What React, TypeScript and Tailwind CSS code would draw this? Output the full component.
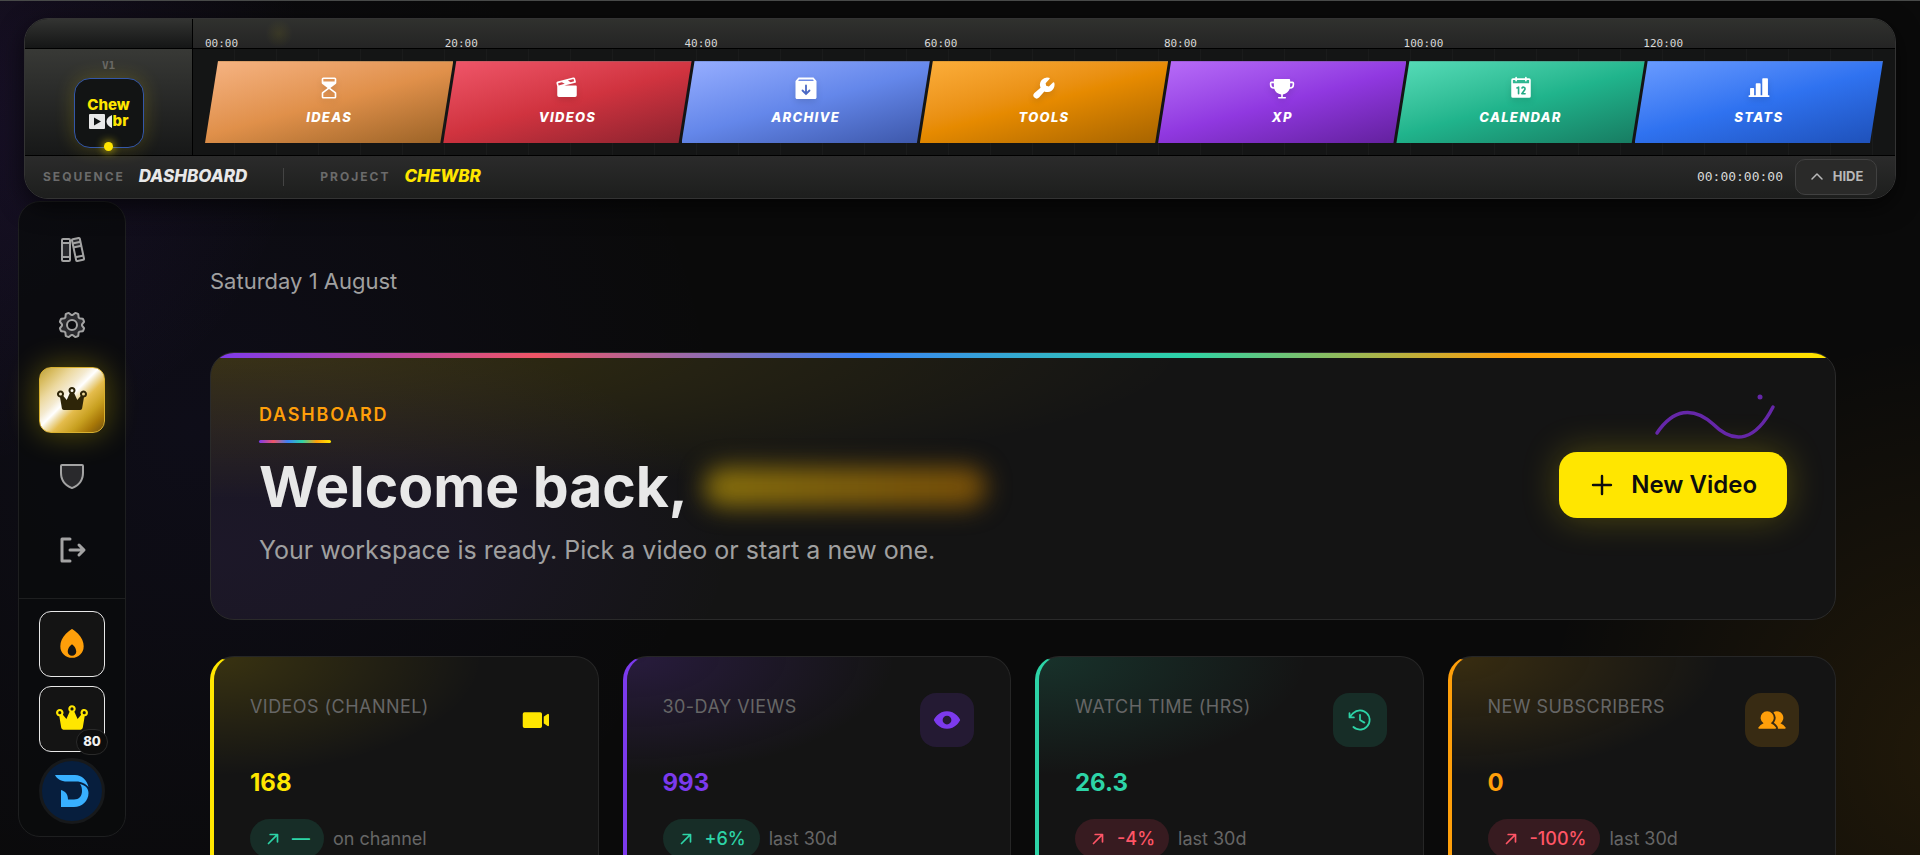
import type { IconType } from 'react-icons'
import {
  PiArrowUpRightBold,
  PiBooksDuotone,
  PiCalendarFill,
  PiCaretUpBold,
  PiChartBarFill,
  PiClockCounterClockwise,
  PiCrownFill,
  PiEyeFill,
  PiFilmSlateFill,
  PiFlameFill,
  PiGearDuotone,
  PiHourglassHighFill,
  PiPlusBold,
  PiShieldDuotone,
  PiSignOutBold,
  PiTrophyFill,
  PiUsersFill,
  PiVideoCameraFill,
  PiWrenchFill,
} from 'react-icons/pi'

function ArchiveIcon({ className }: { className?: string }) {
  return (
    <svg className={className} viewBox="0 0 26 26" fill="none" aria-hidden="true">
      <path
        fillRule="evenodd"
        fill="currentColor"
        d="M5.500 2.500H20.500L23.500 6V22.500C23.500 23.300 22.800 24 22 24H4C3.200 24 2.500 23.300 2.500 22.500V6ZM6 4.500 5.200 6H20.800L20 4.500Z"
      />
      <path d="M13 10.500V18.500M9.500 15.500 13 19 16.500 15.500" stroke="#4a68c4" strokeWidth="1.800" strokeLinecap="round" />
    </svg>
  )
}

type Clip = { label: string; icon: IconType | typeof ArchiveIcon; color: string }

const clips: Clip[] = [
  { label: 'IDEAS', icon: PiHourglassHighFill, color: 'from-[#f6b483] via-[#e0904a] to-[#9a6226]' },
  { label: 'VIDEOS', icon: PiFilmSlateFill, color: 'from-[#f0566a] via-[#d0333f] to-[#8a222e]' },
  { label: 'ARCHIVE', icon: ArchiveIcon, color: 'from-[#97aeff] via-[#6487ea] to-[#3c56a8]' },
  { label: 'TOOLS', icon: PiWrenchFill, color: 'from-[#fcae3a] via-[#e68a00] to-[#a56300]' },
  { label: 'XP', icon: PiTrophyFill, color: 'from-[#b86cf8] via-[#9038e0] to-[#62209c]' },
  { label: 'CALENDAR', icon: PiCalendarFill, color: 'from-[#56dcb8] via-[#20b48c] to-[#177a60]' },
  { label: 'STATS', icon: PiChartBarFill, color: 'from-[#6a9bff] via-[#2f72f0] to-[#1e50b8]' },
]

const ticks = ['00:00', '20:00', '40:00', '60:00', '80:00', '100:00', '120:00']

const sideLinks = [
  { label: 'Library', icon: PiBooksDuotone },
  { label: 'Settings', icon: PiGearDuotone },
  { label: 'Premium', icon: PiCrownFill, active: true },
  { label: 'Privacy', icon: PiShieldDuotone },
  { label: 'Sign out', icon: PiSignOutBold },
]

const stats = [
  {
    label: 'VIDEOS (CHANNEL)',
    value: '168',
    delta: '—',
    up: true,
    note: 'on channel',
    icon: PiVideoCameraFill,
    card: 'border-l-[#ffe600] bg-[radial-gradient(ellipse_70%_50%_at_top_left,#ffd60028,transparent)]',
    text: 'text-[#ffe600]',
    tile: '',
  },
  {
    label: '30-DAY VIEWS',
    value: '993',
    delta: '+6%',
    up: true,
    note: 'last 30d',
    icon: PiEyeFill,
    card: 'border-l-[#7c3aed] bg-[radial-gradient(ellipse_70%_50%_at_top_left,#7c3aed30,transparent)]',
    text: 'text-[#7c3aed]',
    tile: 'bg-[#241a33]',
  },
  {
    label: 'WATCH TIME (HRS)',
    value: '26.3',
    delta: '-4%',
    up: false,
    note: 'last 30d',
    icon: PiClockCounterClockwise,
    card: 'border-l-[#2dd4a7] bg-[radial-gradient(ellipse_70%_50%_at_top_left,#2dd4a728,transparent)]',
    text: 'text-[#2dd4a7]',
    tile: 'bg-[#172d27]',
  },
  {
    label: 'NEW SUBSCRIBERS',
    value: '0',
    delta: '-100%',
    up: false,
    note: 'last 30d',
    icon: PiUsersFill,
    card: 'border-l-[#ff9f0a] bg-[radial-gradient(ellipse_70%_50%_at_top_left,#ffb40028,transparent)]',
    text: 'text-[#ff9f0a]',
    tile: 'bg-[#382b13]',
  },
]

function Logo() {
  return (
    <a
      href="#"
      aria-label="Chewbr home"
      className="relative flex h-[70px] w-[70px] flex-col items-center justify-center rounded-2xl border border-[#3457a8] bg-[#121414] text-[15px] leading-4 font-extrabold text-[#ffe600] shadow-[0_0_20px_#ffe60033]"
    >
      <span>Chew</span>
      <span className="flex items-center">
        <svg width="24" height="15" viewBox="0 0 24 15" aria-hidden="true">
          <rect x="0" y="0" width="16" height="15" rx="1" fill="#e8e8e8" />
          <path d="M5 3.5 12 7.5 5 11.5Z" fill="#121414" />
          <path d="M23 1V14C19 12 17.500 10 17.500 7.500S19 3 23 1Z" fill="#e8e8e8" />
        </svg>
        br
      </span>
      <span className="absolute -bottom-1 h-[9px] w-[9px] rounded-full bg-[#ffe600] shadow-[0_0_10px_#ffe600]" />
    </a>
  )
}

function TimelineHeader() {
  return (
    <header className="relative z-10 mx-6 overflow-hidden rounded-3xl border border-[#333] bg-[#141515] shadow-[0_8px_24px_#0009]">
      <div className="flex">
        <div className="w-[168px] shrink-0 border-r border-black">
          <div className="h-[30px] border-b border-black bg-linear-to-b from-[#333432] to-[#151616]" />
          <div className="flex h-[106px] flex-col items-center gap-1 bg-linear-to-b from-[#383936] to-[#171818] pt-[9px]">
            <span className="font-[DejaVu_Sans_Mono] text-[11px] leading-4 font-bold text-[#666]">V1</span>
            <Logo />
          </div>
        </div>
        <div className="min-w-0 flex-1">
          <div className="relative flex h-[30px] items-end border-b border-black bg-linear-to-b from-[#30312e] to-[#242424] px-3">
            <div className="absolute inset-y-0 left-[72px] w-7 bg-[radial-gradient(ellipse_at_center,#ffe60012,transparent_70%)]" />
            {ticks.map((t) => (
              <span key={t} className="flex-1 font-[DejaVu_Sans_Mono] text-[11px] leading-2 text-[#d8d8d8]">
                {t}
              </span>
            ))}
          </div>
          <nav className="flex h-[106px] bg-[repeating-linear-gradient(90deg,#141515_0,#141515_41px,#1a1b1b_41px,#1a1b1b_42px)] px-3 py-3">
            {clips.map(({ label, icon: Icon, color }) => (
              <a
                key={label}
                href="#"
                className={`-mr-[10px] flex flex-1 flex-col items-center justify-center gap-1.5 border-t border-white/20 bg-linear-165 pb-[3px] text-white [clip-path:polygon(13px_0,100%_0,calc(100%_-_13px)_100%,0_100%)] last:mr-0 ${color}`}
              >
                <Icon className="h-[26px] w-[26px] drop-shadow-md" />
                <span className="text-[13px] leading-5 font-extrabold tracking-widest italic">{label}</span>
              </a>
            ))}
          </nav>
        </div>
      </div>
      <div className="flex h-[43px] items-center border-t border-black bg-linear-to-b from-[#2b2b2b] to-[#1d1e1d] px-[18px]">
        <span className="text-xs font-bold tracking-[2px] text-[#6b6b6b]">SEQUENCE</span>
        <span className="ml-3.5 text-[17px] font-extrabold text-[#e8e8e8] italic">DASHBOARD</span>
        <span className="mx-9 h-[18px] w-px bg-[#444]" />
        <span className="text-xs font-bold tracking-[2px] text-[#6b6b6b]">PROJECT</span>
        <span className="ml-3.5 text-[17px] font-extrabold text-[#ffe600] italic">CHEWBR</span>
        <span className="ml-auto font-[DejaVu_Sans_Mono] text-[13px] text-[#d8d8d8]">00:00:00:00</span>
        <button
          type="button"
          className="ml-3 flex h-9 w-[82px] items-center justify-center gap-2 rounded-[10px] border border-[#414141] bg-[#2a2a29] text-[13px] font-bold text-[#b8b8b8]"
        >
          <PiCaretUpBold className="h-4 w-4" />
          HIDE
        </button>
      </div>
    </header>
  )
}

function Sidebar() {
  return (
    <aside className="flex w-[108px] shrink-0 flex-col self-start rounded-[22px] border border-[#1e1f20] bg-[#0a0b0d]/80">
      <nav className="flex flex-col items-center gap-[9px] py-[15px]">
        {sideLinks.map(({ label, icon: Icon, active }) => (
          <a
            key={label}
            href="#"
            aria-label={label}
            className={
              active
                ? 'flex h-[66px] w-[66px] items-center justify-center rounded-xl border border-[#d8b030] bg-[linear-gradient(135deg,#b8a040_0%,#d8bc60_12%,#ecd9a0_26%,#f4ead0_38%,#fff_46%,#f0e0b0_52%,#e4bc4c_60%,#c8a020_74%,#a87808_86%,#705010_100%)] text-[#2e2508] shadow-[0_0_32px_#ffe60055]'
                : 'flex h-[66px] w-[66px] items-center justify-center text-[#a3a3a3]'
            }
          >
            <Icon className="h-8 w-8" />
          </a>
        ))}
      </nav>
      <div className="flex flex-col items-center border-t border-[#1e1f20] py-3">
        <button
          type="button"
          aria-label="Streak"
          className="flex h-[66px] w-[66px] items-center justify-center rounded-xl border border-[#e8e8e8] bg-[#141414] text-[#ff9f0a]"
        >
          <PiFlameFill className="h-[34px] w-[34px]" />
        </button>
        <button
          type="button"
          aria-label="Level"
          className="relative mt-[9px] flex h-[66px] w-[66px] items-center justify-center rounded-xl border border-[#e8e8e8] bg-[#141414] text-[#ffe600]"
        >
          <PiCrownFill className="h-[34px] w-[34px]" />
          <span className="absolute -right-1 -bottom-1 flex h-[26px] w-8 items-center justify-center rounded-full border border-[#2a2a2a] bg-[#0d0d0d] text-[13px] font-extrabold text-[#f0f0f0]">
            80
          </span>
        </button>
        <button
          type="button"
          aria-label="Profile"
          className="mt-1.5 flex h-[66px] w-[66px] items-center justify-center rounded-full border-[3px] border-[#17191b] bg-[#071e3d]"
        >
          <svg width="34" height="32" viewBox="0 0 34 32" fill="#38b0ff" aria-hidden="true">
            <path d="M0 0H20C27 0 32 5 33.500 12C31 9 27 6.500 21 6.500H12C6 6.500 2 4 0 0Z" />
            <path d="M25 9C30 10 33.500 13 33.500 18C33.500 26 27 32 19 32H6V15C10 16 13 19 13 24.500H19C24 24.500 27 21 27 16C27 13 26.500 11 25 9Z" />
          </svg>
        </button>
      </div>
    </aside>
  )
}

const rainbow = 'bg-[linear-gradient(90deg,#7c3aed,#ef5566_20%,#3b82f6_40%,#2dd4a7_60%,#ff9f0a_80%,#ffe600)]'

function Hero() {
  return (
    <section className="relative mt-[55px] flex items-center justify-between overflow-hidden rounded-3xl border border-[#2a2a2a] bg-[#141414] bg-[radial-gradient(ellipse_60%_55%_at_0%_0%,#ffd60026,transparent),radial-gradient(ellipse_32%_95%_at_0%_75%,#6c3aed18,#6c3aed12_50%,transparent)] px-12 pt-12 pb-[51px]">
      <div className={`absolute inset-x-0 top-0 h-[5px] ${rainbow}`} />
      <div>
        <p className="text-lg leading-7 font-semibold tracking-widest text-[#ff9f0a]">DASHBOARD</p>
        <div className={`mt-[11px] h-[3px] w-[72px] rounded-full ${rainbow}`} />
        <h1 className="mt-[11px] flex items-center text-[57px] leading-[66px] font-bold text-[#e8e8e8]">
          Welcome back,
          <span className="ml-4 h-10 w-[282px] rounded-full bg-linear-to-r from-[#8a720c] via-[#80600c] to-[#7a5008] blur-[12px]" />
        </h1>
        <p className="mt-3 text-[25px] leading-9 text-[#a0a0a0]">
          Your workspace is ready. Pick a video or start a new one.
        </p>
      </div>
      <div className="relative">
        <svg
          className="absolute right-[10px] bottom-[74px]"
          width="124"
          height="52"
          viewBox="0 0 124 52"
          fill="none"
          aria-hidden="true"
        >
          <path
            d="M4 41C20 17 40 14 60 32C82 54 103 48 120 15"
            stroke="#6527a8"
            strokeWidth="3.500"
            strokeLinecap="round"
          />
          <circle cx="107" cy="5" r="2.500" fill="#6527a8" />
        </svg>
        <button
          type="button"
          className="flex h-[66px] items-center gap-4 rounded-[18px] bg-[#ffe600] px-[30px] text-2xl font-semibold text-[#0d0d0d] shadow-[0_0_36px_#ffe60040]"
        >
          <PiPlusBold className="h-[26px] w-[26px]" />
          New Video
        </button>
      </div>
    </section>
  )
}

function StatCards() {
  return (
    <section className="mt-9 grid grid-cols-4 gap-6">
      {stats.map(({ label, value, delta, up, note, icon: Icon, card, text, tile }) => (
        <article key={label} className={`rounded-3xl border border-l-4 border-[#262626] bg-[#141414] p-9 ${card}`}>
          <div className="flex items-start justify-between">
            <h2 className="text-lg leading-7 tracking-wide text-[#666]">{label}</h2>
            <span className={`flex h-[54px] w-[54px] items-center justify-center rounded-2xl ${text} ${tile}`}>
              <Icon className="h-7 w-7" />
            </span>
          </div>
          <p className={`mt-[18px] text-2xl leading-9 font-bold ${text}`}>{value}</p>
          <div className="mt-[18px] flex items-center gap-[9px] text-lg text-[#666]">
            <span
              className={`flex h-[39px] items-center gap-2.5 rounded-full px-3.5 font-medium ${
                up ? 'bg-[#172d27] text-[#2dd4a7]' : 'bg-[#371b20] text-[#ff5566]'
              }`}
            >
              <PiArrowUpRightBold className="h-[18px] w-[18px]" />
              {delta}
            </span>
            {note}
          </div>
        </article>
      ))}
    </section>
  )
}

export default function App() {
  return (
    <div className="flex h-screen flex-col overflow-hidden border-t border-[#484a49] bg-[#0a0a0a] bg-[radial-gradient(circle_at_-4%_10%,#7c3aed1e,transparent_18%),radial-gradient(circle_at_10%_50%,#4c3aed10,transparent_30%),radial-gradient(circle_at_102%_88%,#ffa80018,transparent_20%)] pt-[17px] font-[Inter,sans-serif]">
      <TimelineHeader />
      <div className="flex min-h-0 flex-1 pt-0.5 pl-[18px]">
        <Sidebar />
        <main className="min-w-0 flex-1 px-[84px] pt-16">
          <p className="text-[22px] leading-8 text-[#a0a0a0]">Saturday 1 August</p>
          <Hero />
          <StatCards />
        </main>
      </div>
    </div>
  )
}
